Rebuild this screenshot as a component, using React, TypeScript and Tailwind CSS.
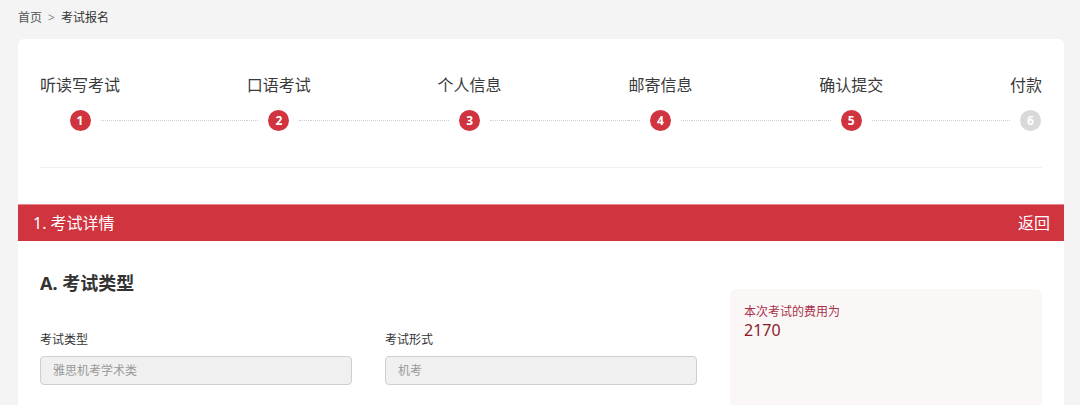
import React from "react";

const steps = [
  { label: "听读写考试", n: 1, done: true },
  { label: "口语考试", n: 2, done: true },
  { label: "个人信息", n: 3, done: true },
  { label: "邮寄信息", n: 4, done: true },
  { label: "确认提交", n: 5, done: true },
  { label: "付款", n: 6, done: false },
];

const font = { fontFamily: '"Noto Sans", "Noto Sans CJK SC", sans-serif' };

function Dots({ show, className = "" }: { show: boolean; className?: string }) {
  return (
    <div className={`flex-1 ${className}`}>
      {show && <div className="border-t border-dotted border-[#cfcfcf]" />}
    </div>
  );
}

export default function App() {
  const cols: React.ReactNode[] = [];
  const circles: React.ReactNode[] = [];
  steps.forEach((s, i) => {
    cols.push(
      <div key={`l${i}`} className="text-[16px] leading-[24px] text-[#3a3a3a] text-center whitespace-nowrap" style={{ gridColumn: i * 2 + 1, gridRow: 1 }}>
        {s.label}
      </div>
    );
    circles.push(
      <div key={`c${i}`} className="contain-inline-size flex items-center mt-[13px]" style={{ gridColumn: i * 2 + 1, gridRow: 2 }}>
        <Dots show={i > 0} className="mr-[10px]" />
        <div
          className={`w-[21px] h-[21px] shrink-0 rounded-full flex items-center justify-center text-white text-[12px] font-bold ${
            s.done ? "bg-[#d0343f]" : "bg-[#d9d9d9]"
          }`}
        >
          {s.n}
        </div>
        <Dots show={i < steps.length - 1} className="ml-[10px]" />
      </div>
    );
    if (i < steps.length - 1) {
      circles.push(
        <div key={`d${i}`} className="flex items-center mt-[13px]" style={{ gridColumn: i * 2 + 2, gridRow: 2 }}>
          <Dots show={true} />
        </div>
      );
    }
  });

  return (
    <div className="min-h-[405px] bg-[#f4f4f4] pl-[18px] pr-[16px]" style={font}>
      <div className="h-[39px] flex items-center text-[12px] text-[#555] pb-[4px]">
        <span>首页</span>
        <span className="mx-[6px] text-[#888]">&gt;</span>
        <span className="text-[#333]">考试报名</span>
      </div>
      <div className="bg-white rounded-[6px] pb-[20px]">
        <div className="px-[22px] pt-[34px]">
          <div
            className="grid"
            style={{ gridTemplateColumns: "auto 1fr auto 1fr auto 1fr auto 1fr auto 1fr auto" }}
          >
            {cols}
            {circles}
          </div>
          <div className="mt-[36px] border-t border-[#f0f0f0]" />
        </div>
        <div className="mt-[36px] h-[37px] bg-[#d0343f] border-t border-[#e8878d] flex items-center justify-between pl-[15px] pr-[14px] text-white text-[16px]">
          <span>1. 考试详情</span>
          <span>返回</span>
        </div>
        <div className="px-[22px] pt-[28px] flex gap-[33px]">
          <div className="flex-1">
            <div className="text-[18px] font-bold text-[#333] leading-[28px]">A. 考试类型</div>
            <div className="mt-[34px] flex gap-[33px]">
              <div className="flex-1">
                <div className="text-[12px] text-[#333] leading-[18px]">考试类型</div>
                <div className="mt-[7px] h-[29px] rounded-[4px] border border-[#cfcfcf] bg-[#f0f0f0] flex items-center px-[12px] text-[12px] text-[#999]">
                  雅思机考学术类
                </div>
              </div>
              <div className="flex-1">
                <div className="text-[12px] text-[#333] leading-[18px]">考试形式</div>
                <div className="mt-[7px] h-[29px] rounded-[4px] border border-[#cfcfcf] bg-[#f0f0f0] flex items-center px-[12px] text-[12px] text-[#999]">
                  机考
                </div>
              </div>
            </div>
          </div>
          <div className="w-[312px] mt-[20px] h-[140px] rounded-[6px] bg-[#fcf7f7] px-[14px] pt-[15px]">
            <div className="text-[12px] text-[#a8324a] leading-[16px]">本次考试的费用为</div>
            <div className="text-[16px] text-[#8a1c2b] leading-[20px]">2170</div>
          </div>
        </div>
      </div>
    </div>
  );
}
